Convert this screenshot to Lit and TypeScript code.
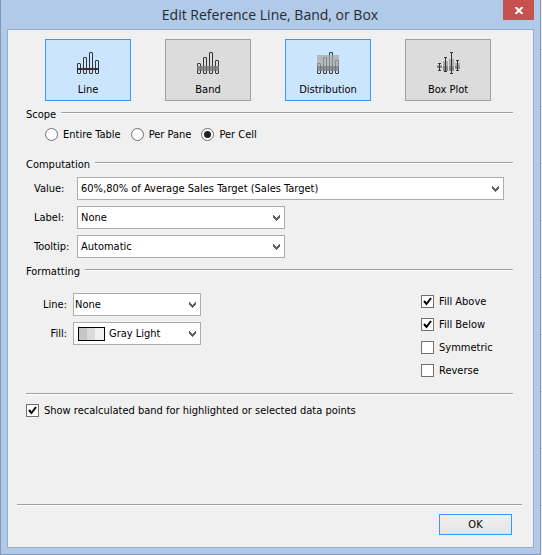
import { LitElement, html, css, svg, nothing } from "lit";
import { customElement, property, state } from "lit/decorators.js";
import { classMap } from "lit/directives/class-map.js";

type TileKind = "line" | "band" | "distribution" | "box";

const bars = svg`
  <g fill="none" stroke="#333333" stroke-width="1">
    <rect x="0.5" y="11.5" width="3" height="10" rx="0.5"/>
    <rect x="6.5" y="5.5" width="3" height="16" rx="0.5"/>
    <rect x="12.5" y="0.5" width="3" height="21" rx="0.5"/>
    <rect x="18.5" y="8.5" width="3" height="13" rx="0.5"/>
  </g>`;

const overlays = {
  line: svg`${bars}<rect x="0" y="16" width="22" height="2" fill="#333333"/>`,
  band: svg`${bars}<rect x="0" y="14" width="22" height="5" fill="#777777" fill-opacity="0.8"/>`,
  distribution: svg`${bars}
    <rect x="0" y="3" width="22" height="11" fill="#a8a8a8" fill-opacity="0.75"/>
    <rect x="0" y="14" width="22" height="5" fill="#808080" fill-opacity="0.85"/>`,
  box: svg`
    <path fill="#acacac" d="M0 13h5v2H0zM6 9h5v5H6zM12 7h5v7h-5zM18 11h5v3h-5z"/>
    <path fill="#8a8a8a" d="M0 14h5v2H0zM6 14h5v5H6zM12 14h5v5h-5zM18 14h5v3h-5z"/>
    <path fill="none" stroke="#333333" d="M2.5 11v8M8.5 5v15M14.5 0v22M20.5 8v11M1 11.5h3M1 18.5h3M7 5.5h3M7 19.5h3M13 0.5h3M13 21.5h3M19 8.5h3M19 18.5h3"/>`,
};

@customElement("combo-box")
class ComboBox extends LitElement {
  @property() label = "";
  @property() value = "";
  @property({ type: Boolean }) swatch = false;
  @property({ type: Boolean, reflect: true }) tight = false;

  static styles = css`
    :host { display: block; }
    .row { display: flex; align-items: center; }
    label { flex: none; width: 43px; }
    :host([tight]) label { width: 33px; margin-right: 6px; text-align: right; }
    .box { position: relative; flex: 1; min-width: 0; }
    select {
      appearance: none; display: block; width: 100%; height: 23px; box-sizing: border-box;
      margin: 0; padding: 0 20px 0 3px; border: 1px solid #abadb3; border-radius: 0;
      background: #fff; color: #000; font: inherit;
    }
    :host([tight]) select { padding-left: 1px; }
    :host([tight]) select.swatched { padding-left: 35px; }
    .arrow { position: absolute; right: 5px; top: 9px; pointer-events: none; }
    .swatch { position: absolute; left: 5px; top: 5px; pointer-events: none; }
  `;

  render() {
    return html`<div class="row">
      <label for="field">${this.label}</label>
      <div class="box">
        <select id="field" class=${classMap({ swatched: this.swatch })}>
          <option>${this.value}</option>
        </select>
        ${this.swatch
          ? html`<svg class="swatch" width="27" height="14" aria-hidden="true">
              <rect x="1" y="1" width="8" height="12" fill="#c6c6c6"/>
              <rect x="9" y="1" width="8" height="12" fill="#dadada"/>
              <rect x="17" y="1" width="9" height="12" fill="#f0f0f0"/>
              <rect x="0.5" y="0.5" width="26" height="13" fill="none" stroke="#000"/>
            </svg>`
          : nothing}
        <svg class="arrow" width="7" height="6" aria-hidden="true">
          <path fill="#606060" d="M0 0h1v1h1v1h1v1h1v-1h1v-1h1v-1h1v3h-1v1h-1v1h-1v1h-1v-1h-1v-1h-1v-1h-1z"/>
        </svg>
      </div>
    </div>`;
  }
}

@customElement("check-item")
class CheckItem extends LitElement {
  @property() label = "";
  @property() type: "checkbox" | "radio" = "checkbox";
  @property({ type: Boolean }) checked = false;

  static styles = css`
    :host { display: block; }
    label { display: flex; align-items: center; gap: 5px; height: 15px; white-space: nowrap; }
    .mark { position: relative; display: block; width: 13px; height: 13px; flex: none; }
    input {
      appearance: none; display: block; width: 13px; height: 13px; box-sizing: border-box;
      margin: 0; border: 1px solid #707070; background: #fff;
    }
    input[type="radio"] { border-radius: 50%; }
    svg { position: absolute; left: 0; top: 0; pointer-events: none; visibility: hidden; }
    input:checked + svg { visibility: visible; }
  `;

  private toggle(e: Event) {
    this.checked = (e.target as HTMLInputElement).checked;
    this.dispatchEvent(new Event("change"));
  }

  render() {
    return html`<label>
      <span class="mark">
        <input type=${this.type} .checked=${this.checked} @change=${this.toggle}>
        <svg width="13" height="13" aria-hidden="true">
          ${this.type === "radio"
            ? svg`<circle cx="6.5" cy="6.5" r="3.5" fill="#212121"/>`
            : svg`<path d="M3 6L5.5 9L10 3" fill="none" stroke="#000" stroke-width="2"/>`}
        </svg>
      </span>
      <span>${this.label}</span>
    </label>`;
  }
}

@customElement("app-root")
class AppRoot extends LitElement {
  @state() private scope = "Per Cell";
  @state() private pressed: TileKind[] = ["line", "distribution"];

  static styles = css`
    :host {
      display: block; box-sizing: border-box; min-height: 100vh; padding-right: 1px;
      background: repeating-linear-gradient(#f0f0f0 0 49px, #c8c8c8 49px 50px, #f0f0f0 50px 57px);
      color: #000; font: 11px/15px "DejaVu Sans Condensed", "DejaVu Sans", sans-serif;
    }
    .window {
      display: flex; flex-direction: column; box-sizing: border-box; min-height: 100vh;
      padding: 0 6px 6px; border: solid #8497b8; border-width: 0 1px 1px; background: #b0cae7;
    }
    header { display: grid; grid-template-columns: 30px 1fr 31px; height: 29px; }
    h1 {
      grid-column: 2; margin: 0; text-align: center; color: #262b33;
      font: 14px/29px "Open Sans", sans-serif;
    }
    .close {
      display: grid; place-items: center; width: 31px; height: 20px; margin: 0; padding: 0;
      border: 0; background: #c75050;
    }
    main {
      flex: 1; display: flex; flex-direction: column; padding: 9px 11px 12px 9px;
      border: 1px solid #94adc9; background: #f0f0f0;
    }
    .body { padding: 0 9px; }
    .tiles { display: flex; justify-content: space-between; padding: 0 22px 0 19px; }
    .tile {
      display: flex; flex-direction: column; align-items: center; gap: 8px; box-sizing: border-box;
      width: 86px; height: 62px; margin: 0; padding: 12px 0 0; border: 1px solid #a0a0a0;
      background: #dcdcdc; color: #000; font: inherit;
    }
    .tile.on { border-color: #3399ff; background: #cce5ff; }
    .tile svg { display: block; }
    h2 { display: flex; gap: 5px; margin: 0; font: inherit; }
    h2::after, hr { content: ""; border: 0; border-top: 1px solid #a0a0a0; border-bottom: 1px solid #fff; }
    h2::after { flex: 1; height: 0; margin-top: 5px; }
    .scope { margin-top: 6px; }
    .radios { display: flex; gap: 10px; padding: 5px 0 0 19px; }
    .computation { margin-top: 15px; }
    .fields { display: flex; flex-direction: column; gap: 6px; padding: 5px 9px 0 8px; }
    .short { width: 251px; }
    .formatting { margin-top: 6px; }
    .format { display: flex; justify-content: space-between; padding: 14px 0 15px 8px; }
    .combos { display: flex; flex-direction: column; gap: 6px; width: 167px; }
    .checks { display: flex; flex-direction: column; gap: 8px; width: 92px; padding-top: 1px; }
    hr { width: 100%; box-sizing: border-box; height: 2px; margin: 0; }
    .recalc { margin-top: 8px; }
    footer { display: flex; flex-direction: column; align-items: flex-end; gap: 8px; margin-top: auto; }
    .ok {
      width: 73px; height: 21px; margin: 0 10px 0 0; padding: 0; border: 1px solid #3399ff;
      background: linear-gradient(#f0f0f0, #e4e4e4); color: #000; font: inherit;
    }
  `;

  private tile(kind: TileKind, name: string) {
    const on = this.pressed.includes(kind);
    const flip = () => {
      this.pressed = on ? this.pressed.filter((k) => k !== kind) : [...this.pressed, kind];
    };
    return html`<button class=${classMap({ tile: true, on })} aria-pressed=${on} @click=${flip}>
      <svg width=${kind === "box" ? 23 : 22} height="22" aria-hidden="true">${overlays[kind]}</svg>
      <span>${name}</span>
    </button>`;
  }

  render() {
    return html`<div class="window">
      <header>
        <h1>Edit Reference Line, Band, or Box</h1>
        <button class="close" aria-label="Close">
          <svg width="8" height="7" aria-hidden="true">
            <path d="M0.5 0L7.5 7M7.5 0L0.5 7" stroke="#fff" stroke-width="2"/>
          </svg>
        </button>
      </header>
      <main>
        <div class="body">
          <div class="tiles">
            ${this.tile("line", "Line")}
            ${this.tile("band", "Band")}
            ${this.tile("distribution", "Distribution")}
            ${this.tile("box", "Box Plot")}
          </div>
          <section class="scope">
            <h2>Scope</h2>
            <div class="radios" role="radiogroup" aria-label="Scope">
              ${["Entire Table", "Per Pane", "Per Cell"].map(
                (s) => html`<check-item type="radio" label=${s} .checked=${this.scope === s}
                  @change=${() => (this.scope = s)}></check-item>`
              )}
            </div>
          </section>
          <section class="computation">
            <h2>Computation</h2>
            <div class="fields">
              <combo-box label="Value:" value="60%,80% of Average Sales Target (Sales Target)"></combo-box>
              <combo-box class="short" label="Label:" value="None"></combo-box>
              <combo-box class="short" label="Tooltip:" value="Automatic"></combo-box>
            </div>
          </section>
          <section class="formatting">
            <h2>Formatting</h2>
            <div class="format">
              <div class="combos">
                <combo-box tight label="Line:" value="None"></combo-box>
                <combo-box tight swatch label="Fill:" value="Gray Light"></combo-box>
              </div>
              <div class="checks">
                <check-item label="Fill Above" checked></check-item>
                <check-item label="Fill Below" checked></check-item>
                <check-item label="Symmetric"></check-item>
                <check-item label="Reverse"></check-item>
              </div>
            </div>
          </section>
          <hr>
          <check-item class="recalc" checked
            label="Show recalculated band for highlighted or selected data points"></check-item>
        </div>
        <footer>
          <hr>
          <button class="ok">OK</button>
        </footer>
      </main>
    </div>`;
  }
}
